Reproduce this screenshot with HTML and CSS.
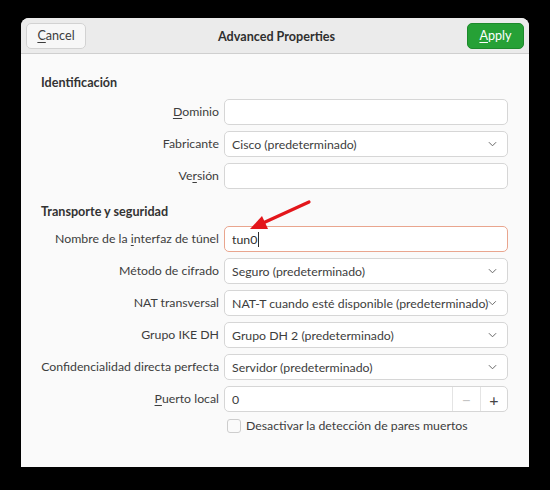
FILE: index.html
```html
<!DOCTYPE html>
<html lang="es">
<head>
<meta charset="utf-8">
<title>Advanced Properties</title>
<link rel="stylesheet" href="styles.css">
</head>
<body>
<div class="dialog">
  <header class="headerbar">
    <button class="btn btn-cancel"><u>C</u>ancel</button>
    <div class="title">Advanced Properties</div>
    <button class="btn btn-apply"><u>A</u>pply</button>
  </header>
  <main class="content">
    <div class="form">
      <div class="section-title first">Identificación</div>

      <div class="label"><u>D</u>ominio</div>
      <div class="field entry"></div>

      <div class="label">Fabricante</div>
      <div class="field combo"><span>Cisco (predeterminado)</span><svg class="chev" viewBox="0 0 10 6"><path d="M1 1 L5 5 L9 1"/></svg></div>

      <div class="label">Ve<u>r</u>sión</div>
      <div class="field entry"></div>

      <div class="section-title second">Transporte y seguridad</div>

      <div class="label">Nombre de la <u>i</u>nterfaz de túnel</div>
      <div class="field entry focus"><span class="typed">tun0</span><span class="caret"></span></div>

      <div class="label">Método de cifrado</div>
      <div class="field combo"><span>Seguro (predeterminado)</span><svg class="chev" viewBox="0 0 10 6"><path d="M1 1 L5 5 L9 1"/></svg></div>

      <div class="label">NAT transversal</div>
      <div class="field combo"><span>NAT-T cuando esté disponible (predeterminado)</span><svg class="chev" viewBox="0 0 10 6"><path d="M1 1 L5 5 L9 1"/></svg></div>

      <div class="label">Grupo IKE DH</div>
      <div class="field combo"><span>Grupo DH 2 (predeterminado)</span><svg class="chev" viewBox="0 0 10 6"><path d="M1 1 L5 5 L9 1"/></svg></div>

      <div class="label">Confidencialidad directa perfecta</div>
      <div class="field combo"><span>Servidor (predeterminado)</span><svg class="chev" viewBox="0 0 10 6"><path d="M1 1 L5 5 L9 1"/></svg></div>

      <div class="label"><u>P</u>uerto local</div>
      <div class="field spin">
        <span class="spin-value">0</span>
        <span class="spin-btn minus">−</span>
        <span class="spin-btn plus">+</span>
      </div>

      <div class="check-row">
        <span class="checkbox"></span>
        <span>Desactivar la detección de pares muertos</span>
      </div>
    </div>
  </main>
</div>
<svg class="arrow" width="550" height="490" viewBox="0 0 550 490">
  <line x1="309" y1="202" x2="263" y2="223" stroke="#e3161b" stroke-width="3.2" stroke-linecap="round"/>
  <polygon points="250,229 268,229 262,216" fill="#e3161b"/>
</svg>
</body>
</html>
```
FILE: styles.css
```css
* { box-sizing: border-box; }
html, body { margin: 0; padding: 0; }
body {
  background: #000;
  width: 550px;
  height: 490px;
  padding: 18px 21px 0 21px;
  font-family: Lato, "Noto Sans", sans-serif;
  font-size: 12.3px;
  color: #3d3d3d;
  position: relative;
}
.dialog {
  width: 508px;
  height: 449px;
  background: #fafafa;
  border-radius: 8px 8px 0 0;
  overflow: hidden;
  display: flex;
  flex-direction: column;
}
.headerbar {
  height: 36px;
  flex: none;
  background: #ebebeb;
  border-bottom: 1px solid #cfcfcf;
  display: flex;
  align-items: center;
  justify-content: space-between;
  padding: 0 5px;
}
.btn {
  font: inherit;
  font-size: 12.6px;
  height: 26px;
  border-radius: 5px;
  padding: 0 10px;
  line-height: 24px;
  margin-top: 1px;
}
.btn u { text-decoration-thickness: 1px; text-underline-offset: 2px; }
.btn-cancel {
  width: 60px;
  background: #f7f7f7;
  border: 1px solid #d2d2d2;
  color: #3d3d3d;
}
.btn-apply {
  width: 57px;
  background: #26a136;
  border: 1px solid #1d8a2c;
  color: #fff;
}
.title {
  font-weight: bold;
  font-size: 12.6px;
  color: #2f2f2f;
  margin-top: 1px;
}
.content {
  flex: 1;
  padding: 20px 21px 0 20px;
}
.form {
  display: grid;
  grid-template-columns: 178px 284px;
  column-gap: 5px;
  row-gap: 6px;
  align-items: center;
}
.section-title {
  grid-column: 1 / -1;
  font-weight: bold;
  font-size: 12.6px;
  color: #333;
  line-height: 18px;
}
.section-title.first { margin-bottom: 1px; }
.section-title.second { margin-top: 8px; margin-bottom: -1px; }
.label {
  text-align: right;
  white-space: nowrap;
  line-height: 18px;
}
.label u { text-underline-offset: 2px; }
.field {
  height: 26px;
  background: #fff;
  border: 1px solid #d6d6d6;
  border-radius: 5px;
  display: flex;
  align-items: center;
  padding: 0 7px;
  white-space: nowrap;
}
.entry.focus {
  border-color: #e9a58e;
}
.typed { color: #2f2f2f; }
.caret {
  width: 1px;
  height: 15px;
  background: #2f2f2f;
  margin-left: 1px;
}
.combo {
  justify-content: space-between;
  padding-right: 10px;
}
.chev {
  width: 9px;
  height: 6px;
  fill: none;
  stroke: #666;
  stroke-width: 1.1;
}
.spin { padding: 0 0 0 7px; }
.spin-value { flex: 1; }
.spin-btn {
  width: 28px;
  height: 100%;
  display: flex;
  align-items: center;
  justify-content: center;
  border-left: 1px solid #e4e4e4;
  font-size: 16px;
}
.spin-btn.minus { color: #c4c4c4; }
.spin-btn.plus { color: #444; width: 27px; }
.check-row {
  grid-column: 2;
  display: flex;
  align-items: center;
  gap: 5px;
  padding-left: 3px;
  line-height: 16px;
}
.checkbox {
  width: 14px;
  height: 14px;
  border: 1px solid #cdcdcd;
  border-radius: 3px;
  background: #fafafa;
}
.arrow {
  position: absolute;
  left: 0;
  top: 0;
  pointer-events: none;
}
```
